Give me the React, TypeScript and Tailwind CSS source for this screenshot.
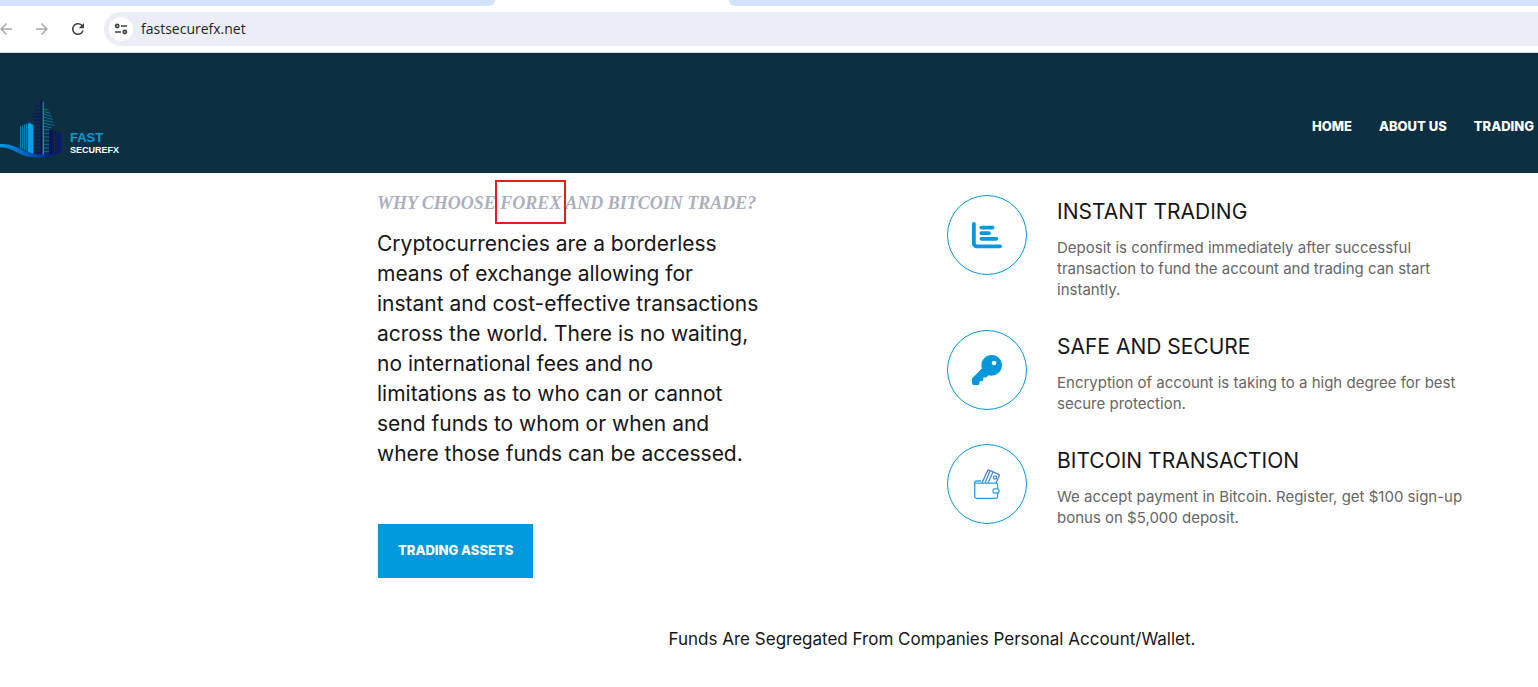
import React from 'react';
import { FaChartBar, FaKey } from 'react-icons/fa6';
import { MdArrowBack, MdArrowForward, MdRefresh } from 'react-icons/md';

interface Feature {
  title: string;
  lines: string[];
  icon: React.ReactNode;
}

function TuneIcon() {
  return (
    <svg width="14" height="14" viewBox="0 0 14 14" fill="none" stroke="#3c4043" strokeWidth="1.7">
      <circle cx="3.2" cy="4" r="1.6" />
      <path d="M7 4h6M1 10h6" />
      <circle cx="10.8" cy="10" r="1.6" />
    </svg>
  );
}

function WalletIcon() {
  return (
    <svg width="28" height="32" viewBox="0 0 28 32" fill="none" stroke="#2e9fe6" strokeWidth="1.3" strokeLinejoin="round">
      <path d="M8 13H3.5a1.8 1.8 0 0 0-1.8 1.8v13.8c0 1 .8 1.8 1.8 1.8h19.3c1 0 1.8-.8 1.8-1.8V25M24.600 21v-4.200c0-1-.8-1.600-1.800-1.600H1.700" />
      <path d="M9 15l5.600-12.300c.3-.6.9-.9 1.500-.6L25.600 6.300c.6.3.9.900.6 1.500L23 15.100" stroke="#4a7fd4" />
      <path d="M12 15l5-12M15 15l5-11" stroke="#3f8ade" />
      <circle cx="22" cy="9.500" r="1.600" stroke="#3f8ade" />
      <rect x="20" y="20.800" width="6" height="4.200" rx="1.600" />
    </svg>
  );
}

function LogoMark() {
  return (
    <svg width="65" height="64" viewBox="0 12 195 192" fill="none">
      <defs>
        <linearGradient id="wave" x1="0" y1="0" x2="1" y2="0">
          <stop offset="0" stopColor="#079ae8" />
          <stop offset="0.5" stopColor="#0755b4" />
          <stop offset="1" stopColor="#0a0a72" />
        </linearGradient>
        <linearGradient id="tower" x1="0" y1="30" x2="0" y2="192" gradientUnits="userSpaceOnUse">
          <stop offset="0" stopColor="#0b7fa6" />
          <stop offset="1" stopColor="#0b8ee0" />
        </linearGradient>
      </defs>
      {/* left tower */}
      <path d="M62 106v66M68 103v72M74 100v77M80 98v82" stroke="#0a8fc9" strokeWidth="3" />
      <path d="M84 97l4-2 12 6v88l-16-6z" fill="#06a0ea" />
      {/* centre towers */}
      <path
        d="M106 46h18M103 57h21M100 68h24M96 77h28M104 88h20M104 98h20M104 109h20M104 120h20M104 131h20M104 142h20M104 153h20M104 164h20M104 175h20M104 186h20"
        stroke="#10136e"
        strokeWidth="3"
      />
      <path d="M124 24v168" stroke="#0b0b6b" strokeWidth="4" />
      <path d="M130 32v160" stroke="url(#tower)" strokeWidth="4" />
      <path
        d="M132 54l14 4M132 62l20 5M132 70l24 6M132 79l27 6M132 88l29 6M132 97l31 6M132 106l22 4M132 116h16M132 127h16M132 138h16M132 149h16M132 160h16M132 171h16M132 182h16"
        stroke="#0b7ca0"
        strokeWidth="2.500"
      />
      {/* right tower */}
      <path d="M148 120l9-6v78h-9z" fill="#08086e" />
      <path d="M160 115v75M167 118v71M174 121v67M181 125v60" stroke="#11116e" strokeWidth="4" />
      <path d="M0 159c30-2 48 8 72 20 34 16 74 14 110 4-30 20-92 24-126 4C36 176 20 169 0 169z" fill="url(#wave)" />
    </svg>
  );
}

const navLinks = ['HOME', 'ABOUT US', 'TRADING'];

const introLines = [
  'Cryptocurrencies are a borderless',
  'means of exchange allowing for',
  'instant and cost-effective transactions',
  'across the world. There is no waiting,',
  'no international fees and no',
  'limitations as to who can or cannot',
  'send funds to whom or when and',
  'where those funds can be accessed.',
];

const features: Feature[] = [
  {
    title: 'INSTANT TRADING',
    lines: [
      'Deposit is confirmed immediately after successful',
      'transaction to fund the account and trading can start',
      'instantly.',
    ],
    icon: <FaChartBar className="h-[30px] w-[30px]" />,
  },
  {
    title: 'SAFE AND SECURE',
    lines: ['Encryption of account is taking to a high degree for best', 'secure protection.'],
    icon: <FaKey className="h-[30px] w-[30px]" />,
  },
  {
    title: 'BITCOIN TRANSACTION',
    lines: ['We accept payment in Bitcoin. Register, get $100 sign-up', 'bonus on $5,000 deposit.'],
    icon: <WalletIcon />,
  },
];

function BrowserBar() {
  return (
    <div className="border-b border-[#d5dde0] bg-white">
      <div className="flex h-1.5">
        <div className="w-[495px] rounded-br-lg bg-[#d3e3fd]" />
        <div className="w-[234px]" />
        <div className="flex-1 rounded-bl-lg bg-[#d3e3fd]" />
      </div>
      <div className="flex items-center py-1.5">
        <div className="flex w-[104px] items-center gap-[18px] overflow-hidden">
          <button aria-label="Back" className="-ml-[3px] text-[#a9a9a9]">
            <MdArrowBack className="h-[18px] w-[18px]" />
          </button>
          <button aria-label="Forward" className="text-[#a9a9a9]">
            <MdArrowForward className="h-[18px] w-[18px]" />
          </button>
          <button aria-label="Reload" className="text-[#3c4043]">
            <MdRefresh className="h-[18px] w-[18px]" />
          </button>
        </div>
        <div className="flex h-[34px] flex-1 items-center gap-2 rounded-l-full bg-[#ebeef7] pl-[5px]">
          <button aria-label="Site information" className="flex h-6 w-6 items-center justify-center rounded-full bg-white">
            <TuneIcon />
          </button>
          <input
            aria-label="Address"
            defaultValue="fastsecurefx.net"
            className="flex-1 bg-transparent font-['Open_Sans',sans-serif] text-sm text-[#1f1f1f] outline-none"
          />
        </div>
      </div>
    </div>
  );
}

function SiteHeader() {
  return (
    <header className="flex items-center justify-between bg-[#0c3041] pt-[42px] pr-1 pb-[14px]">
      <a href="#" className="flex items-end gap-[5px]">
        <LogoMark />
        <span className="pb-[3px] font-['Liberation_Sans',sans-serif] font-bold">
          <span className="block text-[13px] leading-3 text-[#0a97dc]">FAST</span>
          <span className="block text-[9px] leading-3 text-white">SECUREFX</span>
        </span>
      </a>
      <nav className="flex gap-[27px] text-[13px] font-extrabold text-white">
        {navLinks.map((link) => (
          <a key={link} href="#">
            {link}
          </a>
        ))}
      </nav>
    </header>
  );
}

function FeatureItem({ title, lines, icon }: Feature) {
  return (
    <li className="flex gap-[30px]">
      <div className="flex h-20 w-20 shrink-0 items-center justify-center rounded-full border border-[#0099dc] text-[#0099dc]">
        {icon}
      </div>
      <div>
        <h3 className="text-[21px] leading-[34px] text-[#16161a]">{title}</h3>
        <p className="mt-2 text-[15px] leading-[21px] text-[#666]">
          {lines.map((line) => (
            <span key={line} className="block whitespace-nowrap">
              {line}
            </span>
          ))}
        </p>
      </div>
    </li>
  );
}

export default function App() {
  return (
    <div className="min-h-screen bg-white font-['Inter',sans-serif]">
      <BrowserBar />
      <SiteHeader />
      <main className="ml-[362px] max-w-[1140px]">
        <div className="grid grid-cols-2">
          <section className="px-[15px] pt-[18px]">
            <h2 className="font-['Liberation_Serif',serif] text-lg leading-6 font-bold whitespace-nowrap text-[#abafbe] italic">
              WHY CHOOSE{' '}
              <span className="relative">
                FOREX
                <span className="absolute -inset-x-[5px] -top-[13px] -bottom-[11px] border-2 border-[#f01818]" />
              </span>{' '}
              AND BITCOIN TRADE?
            </h2>
            <p className="mt-3.5 text-[21px] leading-[30px] text-[#16161a]">
              {introLines.map((line) => (
                <span key={line} className="block whitespace-nowrap">
                  {line}
                </span>
              ))}
            </p>
            <button className="mt-[55px] ml-px h-[54px] bg-[#0099dc] px-5 text-[13px] font-extrabold text-white">
              TRADING ASSETS
            </button>
          </section>
          <ul className="flex flex-col gap-[30px] px-[15px] pt-[22px]">
            {features.map((feature) => (
              <FeatureItem key={feature.title} {...feature} />
            ))}
          </ul>
        </div>
        <p className="mt-12 text-center text-[17px] leading-[26px] text-[#16161a]">
          Funds Are Segregated From Companies Personal Account/Wallet.
        </p>
      </main>
    </div>
  );
}
